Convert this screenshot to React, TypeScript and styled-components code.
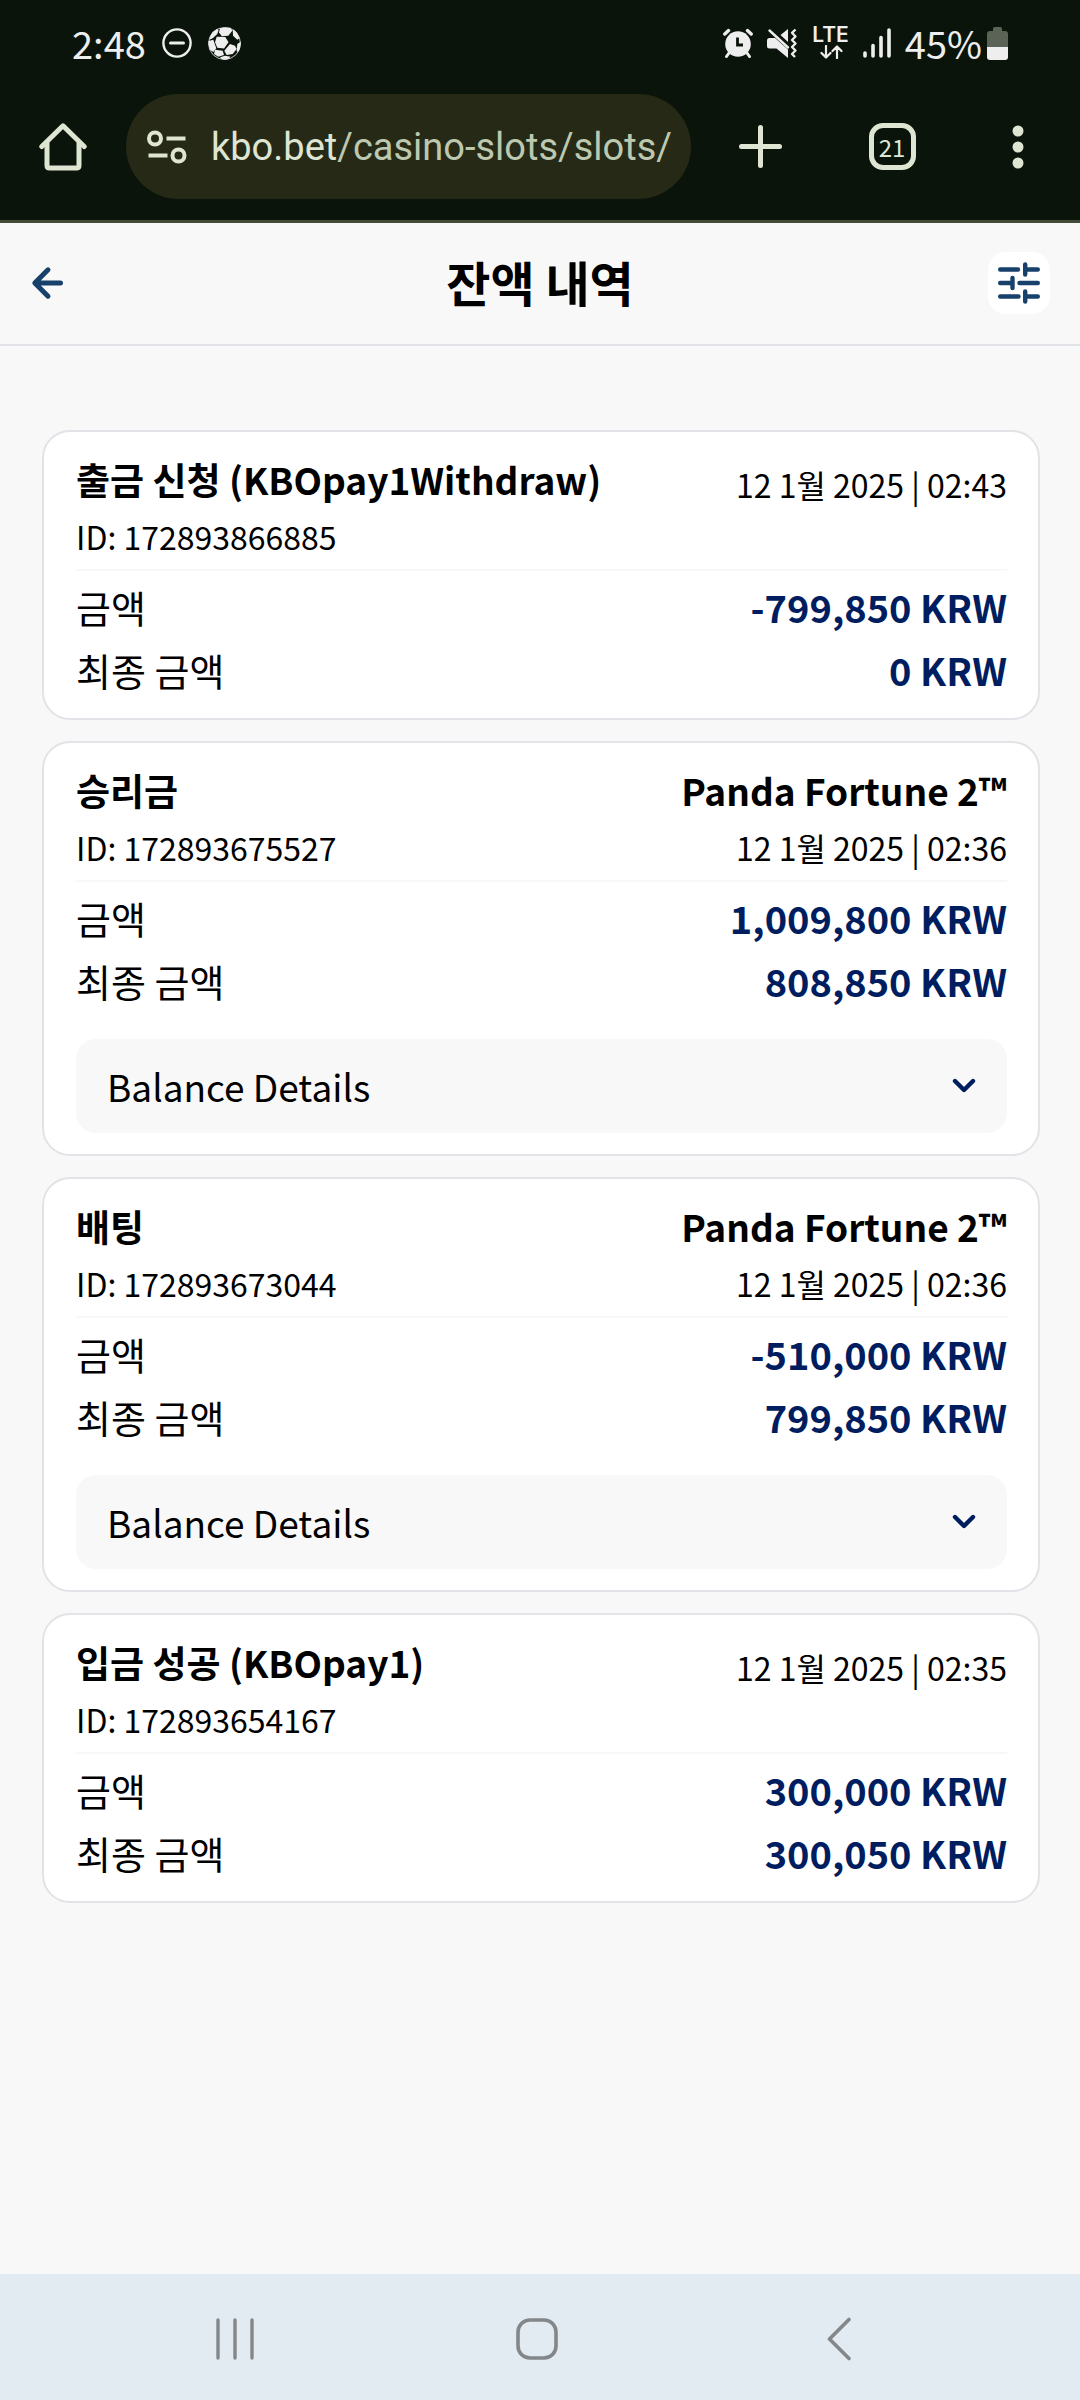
import React, { useState } from "react";
import styled, { createGlobalStyle } from "styled-components";

const GlobalStyle = createGlobalStyle`
  *, *::before, *::after { box-sizing: border-box; }
  body {
    margin: 0;
    background: #f8f8f8;
    color: #000;
    font-family: "Noto Sans CJK KR", sans-serif;
  }
  button { font: inherit; color: inherit; border: 0; padding: 0; background: none; cursor: pointer; }
  svg { display: block; flex: none; }
`;

const Screen = styled.div`
  min-height: 100vh;
  display: flex;
  flex-direction: column;
`;

const BrowserChrome = styled.header`
  background: #0a140a;
  color: #dfe5d3;
  border-bottom: 3px solid #444b39;
`;

const StatusBar = styled.div`
  height: 86px;
  padding: 0 72px;
  display: flex;
  align-items: center;
  justify-content: space-between;
  color: #eeeeee;
  font-size: 38px;
  line-height: 48px;
`;

const StatusGroup = styled.div<{ $gap: number }>`
  display: flex;
  align-items: center;
  gap: ${(p) => p.$gap}px;
`;

const BatteryStatus = styled.span`
  display: flex;
  align-items: center;
  gap: 5px;
`;

const Toolbar = styled.div`
  display: flex;
  align-items: center;
  padding: 8px 26px 21px 21px;
`;

const ToolButton = styled.button<{ $width?: number }>`
  width: ${(p) => p.$width ?? 84}px;
  height: 84px;
  display: flex;
  align-items: center;
  justify-content: center;
`;

const ToolActions = styled.div`
  display: flex;
  gap: 48px;
  margin-left: 27px;
`;

const Omnibox = styled.div`
  flex: 1;
  min-width: 0;
  height: 105px;
  margin-left: 21px;
  padding: 0 16px 0 21px;
  display: flex;
  align-items: center;
  gap: 24px;
  border-radius: 53px;
  background: #252915;
`;

const Url = styled.a`
  flex: 1;
  overflow: hidden;
  white-space: nowrap;
  text-decoration: none;
  font-family: Roboto, sans-serif;
  font-size: 38px;
  line-height: 48px;
  color: #bcc9b0;
`;

const UrlHost = styled.span`
  color: #dfe5d3;
`;

const TabCount = styled.span`
  width: 47px;
  height: 47px;
  display: flex;
  align-items: center;
  justify-content: center;
  border: 5px solid #dfe5d3;
  border-radius: 14px;
  font-size: 24px;
  line-height: 36px;
`;

const PageHeader = styled.div`
  height: 123px;
  padding: 0 30px 2px;
  display: grid;
  grid-template-columns: 62px 1fr 62px;
  align-items: center;
  border-bottom: 2px solid #e1e3e7;
  color: #17406b;
`;

const PageTitle = styled.h1`
  margin: 0;
  padding-bottom: 4px;
  text-align: center;
  color: #000;
  font-size: 48px;
  line-height: 72px;
  font-weight: 700;
`;

const IconButton = styled.button<{ $filled?: boolean }>`
  width: 62px;
  height: 62px;
  display: flex;
  align-items: center;
  justify-content: ${(p) => (p.$filled ? "center" : "flex-start")};
  border-radius: 18px;
  background: ${(p) => (p.$filled ? "#fff" : "transparent")};
`;

const History = styled.main`
  flex: 1;
  padding: 84px 40px 84px 42px;
  display: flex;
  flex-direction: column;
  gap: 21px;
`;

const Card = styled.article`
  padding: 17px 31px 17px 32px;
  border: 2px solid #e1e3e7;
  border-radius: 28px;
  background: #fff;
`;

const CardHead = styled.div`
  display: flex;
  justify-content: space-between;
  padding-bottom: 6px;
  border-bottom: 2px solid #f8f8f8;
`;

const HeadColumn = styled.div<{ $end?: boolean; $dateOnly?: boolean }>`
  text-align: ${(p) => (p.$end ? "right" : "left")};
  padding-top: ${(p) => (p.$dateOnly ? 8 : 0)}px;
`;

const Name = styled.h2`
  margin: 0;
  font-size: 37px;
  line-height: 60px;
  font-weight: 700;
`;

const Game = styled.p`
  margin: 0;
  font-size: 37px;
  line-height: 60px;
  font-weight: 700;
`;

const Meta = styled.p`
  margin: 0;
  font-size: 32px;
  line-height: 54px;
`;

const Amounts = styled.dl`
  margin: 0;
  padding-top: 4px;
`;

const AmountRow = styled.div`
  display: flex;
  justify-content: space-between;
  line-height: 63px;
`;

const AmountLabel = styled.dt`
  font-size: 38px;
`;

const AmountValue = styled.dd`
  margin: 0;
  font-size: 38px;
  font-weight: 700;
  color: #001e5f;
`;

const DetailsToggle = styled.button`
  width: 100%;
  height: 94px;
  margin: 27px 0 4px;
  padding: 0 31px;
  display: flex;
  align-items: center;
  justify-content: space-between;
  border-radius: 20px;
  background: #f8f8f8;
  font-size: 37px;
  line-height: 56px;
  color: #000;
`;

const SystemNav = styled.nav`
  height: 126px;
  padding: 4px 90px 0 84px;
  display: flex;
  background: #e2eaf2;
  color: #838789;
`;

const NavButton = styled.button`
  flex: 1;
  display: flex;
  align-items: center;
  justify-content: center;
`;

const MinusCircleIcon = () => (
  <svg width="30" height="30" viewBox="0 0 30 30" fill="none" stroke="currentColor">
    <circle cx="15" cy="15" r="13.6" strokeWidth="2.4" />
    <path d="M8.5 15h13" strokeWidth="3" strokeLinecap="round" />
  </svg>
);

const SoccerIcon = () => (
  <svg width="33" height="33" viewBox="0 0 33 33" fill="currentColor">
    <path d="M12 1.300Q16 0 22.700.7L24.300 3.700 20.300 8.700 13.700 9.300 11 5.300Z" />
    <path d="M8.700 9.800 17.300 10 20.500 15.300 16 21.500 9.300 20.700 7 15.300Z" />
    <path d="M2.700 8Q5 4 8.700 2L10.700 2.700 9.300 7 4.700 11.300 1.300 12.700Z" />
    <path d="M.5 14 5.300 12.700 8.300 21.300 5.300 25 2 22.700Q0 18 .5 14Z" />
    <path d="M7 22.700 14.700 23.700 16 28 10.300 29.700 6 27Z" />
    <path d="M12 30.300 17 28.700 22.700 29.700 20 32.300Q17 33 14 32.300Z" />
    <path d="M22 17 27 18.700 28.700 22 24.700 27 18.700 28 16.300 23.700Z" />
    <path d="M29.300 17 32.700 14.700Q33.200 21 30 25.300L28.700 24Z" />
    <path d="M24.700 2Q30 5 31.500 11.300L29.300 12.700 25 8.700Z" />
    <circle cx="16.500" cy="16.500" r="16" fill="none" stroke="currentColor" strokeWidth=".8" />
  </svg>
);

const AlarmIcon = () => (
  <svg width="30" height="30" viewBox="0 0 30 30" fill="none" stroke="currentColor" strokeLinecap="round">
    <circle cx="15" cy="16" r="12.800" fill="currentColor" stroke="none" />
    <path d="M1.800 6 5.500 2.600M28.200 6 24.500 2.600" strokeWidth="3.400" />
    <path d="M6 25 3.500 28.500M24 25l2.500 3.500" strokeWidth="3" />
    <path d="M14.500 9.500V17H20" stroke="#0a140a" strokeWidth="2.800" strokeLinecap="butt" />
  </svg>
);

const MuteIcon = () => (
  <svg width="31" height="30" viewBox="0 0 31 30" fill="currentColor">
    <path d="M2.500 10H8L21 21.500V30L9.500 20.500H2.500Q0 20.500 0 18V12.500Q0 10 2.500 10Z" />
    <path d="M21 1V14L13.500 7Z" />
    <path d="M2.500 2.500 21 19.500" stroke="currentColor" strokeWidth="2.400" strokeLinecap="round" />
    <path d="M28.500 1.500 25 4.800 28.500 8.500 25 12 28.500 15.500 25 19 28.500 22.500 25 26 28 29" fill="none" stroke="currentColor" strokeWidth="2.400" strokeLinejoin="round" />
  </svg>
);

const LteLabel = styled.span`
  display: flex;
  flex-direction: column;
  align-items: center;
  font-family: Inter, sans-serif;
  font-size: 21px;
  font-weight: 600;
  line-height: 16px;
  gap: 2px;
`;

const LteArrowsIcon = () => (
  <svg width="24" height="14" viewBox="0 0 24 14" fill="none" stroke="currentColor" strokeWidth="2.200" strokeLinecap="round" strokeLinejoin="round">
    <path d="M7 1v11M2.500 8 7 12.500 11.500 8M18 13V2M13.500 6 18 1.500 22.500 6" />
  </svg>
);

const SignalIcon = () => (
  <svg width="28" height="30" viewBox="0 0 28 30" stroke="currentColor" strokeWidth="3.600" strokeLinecap="round">
    <path d="M2 25v3M10 17.500V28M18 9.500V28M26 2v26" />
  </svg>
);

const BatteryIcon = () => (
  <svg width="21" height="33" viewBox="0 0 21 33">
    <path d="M7.500 0h6q1.500 0 1.500 1.500V4h3q3 0 3 3v14H0V7q0-3 3-3h3V1.500Q6 0 7.500 0Z" fill="#5b6256" />
    <path d="M0 20h21v10q0 3-3 3H3q-3 0-3-3Z" fill="#eee" />
  </svg>
);

const HomeIcon = () => (
  <svg width="48" height="48" viewBox="0 0 48 48" fill="none" stroke="currentColor" strokeWidth="5" strokeLinecap="round" strokeLinejoin="round">
    <path d="M2.800 23.500 24 2.800 45.200 23.500" />
    <path d="M8 20V42.500Q8 45 10.500 45H37.500Q40 45 40 42.500V20" />
  </svg>
);

const SiteInfoIcon = () => (
  <svg width="40" height="34" viewBox="0 0 40 34" fill="none" stroke="currentColor" strokeWidth="4">
    <circle cx="8" cy="8.500" r="6" />
    <circle cx="31.500" cy="25.500" r="6" />
    <path d="M19.500 8.500h19M1.500 25.500h19" />
  </svg>
);

const PlusIcon = () => (
  <svg width="43" height="43" viewBox="0 0 43 43" stroke="currentColor" strokeWidth="5" strokeLinecap="round">
    <path d="M21.500 2.500v38M2.500 21.500h38" />
  </svg>
);

const DotsIcon = () => (
  <svg width="12" height="44" viewBox="0 0 12 44" fill="currentColor">
    <circle cx="6" cy="6" r="5.500" />
    <circle cx="6" cy="22" r="5.500" />
    <circle cx="6" cy="38" r="5.500" />
  </svg>
);

const BackArrowIcon = () => (
  <svg width="34" height="34" viewBox="0 0 34 34" fill="none" stroke="currentColor" strokeWidth="5" strokeLinecap="round" strokeLinejoin="round">
    <path d="M30.500 17H5M18 3.800 4.800 17 18 30.200" />
  </svg>
);

const FilterIcon = () => (
  <svg width="42" height="42" viewBox="0 0 42 42" stroke="currentColor" strokeWidth="4.400" strokeLinecap="round">
    <path d="M2.200 7.500H20M27.200 7.500H39.800M27.200 2.500v10M2.200 21H14.500M14.500 16v10M21.500 21H39.800M2.200 34.500H20.500M27.200 34.500H39.800M27.200 29.500v10" />
  </svg>
);

const ChevronIcon = () => (
  <svg width="24" height="16" viewBox="0 0 24 16" fill="none" stroke="#001e5f" strokeWidth="4.400" strokeLinecap="round" strokeLinejoin="round">
    <path d="M3 3l9 9 9-9" />
  </svg>
);

const RecentsIcon = () => (
  <svg width="38" height="42" viewBox="0 0 38 42" stroke="currentColor" strokeWidth="3.400" strokeLinecap="round">
    <path d="M2 2v38M19 2v38M36 2v38" />
  </svg>
);

const NavHomeIcon = () => (
  <svg width="42" height="42" viewBox="0 0 42 42" fill="none" stroke="currentColor" strokeWidth="3.600">
    <rect x="2" y="2" width="38" height="38" rx="12" />
  </svg>
);

const NavBackIcon = () => (
  <svg width="24" height="44" viewBox="0 0 24 44" fill="none" stroke="currentColor" strokeWidth="3.600" strokeLinecap="round" strokeLinejoin="round">
    <path d="M22 2.500 2.500 22 22 41.500" />
  </svg>
);

type Transaction = {
  id: string;
  name: string;
  game?: string;
  date: string;
  amount: string;
  final: string;
};

const transactions: Transaction[] = [
  { id: "172893866885", name: "출금 신청 (KBOpay1Withdraw)", date: "12 1월 2025 | 02:43", amount: "-799,850 KRW", final: "0 KRW" },
  { id: "172893675527", name: "승리금", game: "Panda Fortune 2™", date: "12 1월 2025 | 02:36", amount: "1,009,800 KRW", final: "808,850 KRW" },
  { id: "172893673044", name: "배팅", game: "Panda Fortune 2™", date: "12 1월 2025 | 02:36", amount: "-510,000 KRW", final: "799,850 KRW" },
  { id: "172893654167", name: "입금 성공 (KBOpay1)", date: "12 1월 2025 | 02:35", amount: "300,000 KRW", final: "300,050 KRW" },
];

function TransactionCard({ item }: { item: Transaction }) {
  const [open, setOpen] = useState(false);
  return (
    <Card>
      <CardHead>
        <HeadColumn>
          <Name>{item.name}</Name>
          <Meta>ID: {item.id}</Meta>
        </HeadColumn>
        <HeadColumn $end $dateOnly={!item.game}>
          {item.game && <Game>{item.game}</Game>}
          <Meta>{item.date}</Meta>
        </HeadColumn>
      </CardHead>
      <Amounts>
        <AmountRow>
          <AmountLabel>금액</AmountLabel>
          <AmountValue>{item.amount}</AmountValue>
        </AmountRow>
        <AmountRow>
          <AmountLabel>최종 금액</AmountLabel>
          <AmountValue>{item.final}</AmountValue>
        </AmountRow>
      </Amounts>
      {item.game && (
        <DetailsToggle type="button" aria-expanded={open} onClick={() => setOpen(!open)}>
          Balance Details
          <ChevronIcon />
        </DetailsToggle>
      )}
    </Card>
  );
}

export default function App() {
  return (
    <Screen>
      <GlobalStyle />
      <BrowserChrome>
        <StatusBar>
          <StatusGroup $gap={16}>
            <span>2:48</span>
            <MinusCircleIcon />
            <SoccerIcon />
          </StatusGroup>
          <StatusGroup $gap={14}>
            <AlarmIcon />
            <MuteIcon />
            <LteLabel>
              LTE
              <LteArrowsIcon />
            </LteLabel>
            <SignalIcon />
            <BatteryStatus>
              45%
              <BatteryIcon />
            </BatteryStatus>
          </StatusGroup>
        </StatusBar>
        <Toolbar>
          <ToolButton type="button" aria-label="Home">
            <HomeIcon />
          </ToolButton>
          <Omnibox>
            <SiteInfoIcon />
            <Url href="#">
              <UrlHost>kbo.bet</UrlHost>/casino-slots/slots/
            </Url>
          </Omnibox>
          <ToolActions>
            <ToolButton type="button" aria-label="New tab">
              <PlusIcon />
            </ToolButton>
            <ToolButton type="button" aria-label="Tabs">
              <TabCount>21</TabCount>
            </ToolButton>
            <ToolButton type="button" aria-label="Menu" $width={72}>
              <DotsIcon />
            </ToolButton>
          </ToolActions>
        </Toolbar>
      </BrowserChrome>
      <PageHeader>
        <IconButton type="button" aria-label="Back">
          <BackArrowIcon />
        </IconButton>
        <PageTitle>잔액 내역</PageTitle>
        <IconButton type="button" aria-label="Filter" $filled>
          <FilterIcon />
        </IconButton>
      </PageHeader>
      <History>
        {transactions.map((item) => (
          <TransactionCard key={item.id} item={item} />
        ))}
      </History>
      <SystemNav>
        <NavButton type="button" aria-label="Recents">
          <RecentsIcon />
        </NavButton>
        <NavButton type="button" aria-label="Home screen">
          <NavHomeIcon />
        </NavButton>
        <NavButton type="button" aria-label="Go back">
          <NavBackIcon />
        </NavButton>
      </SystemNav>
    </Screen>
  );
}
